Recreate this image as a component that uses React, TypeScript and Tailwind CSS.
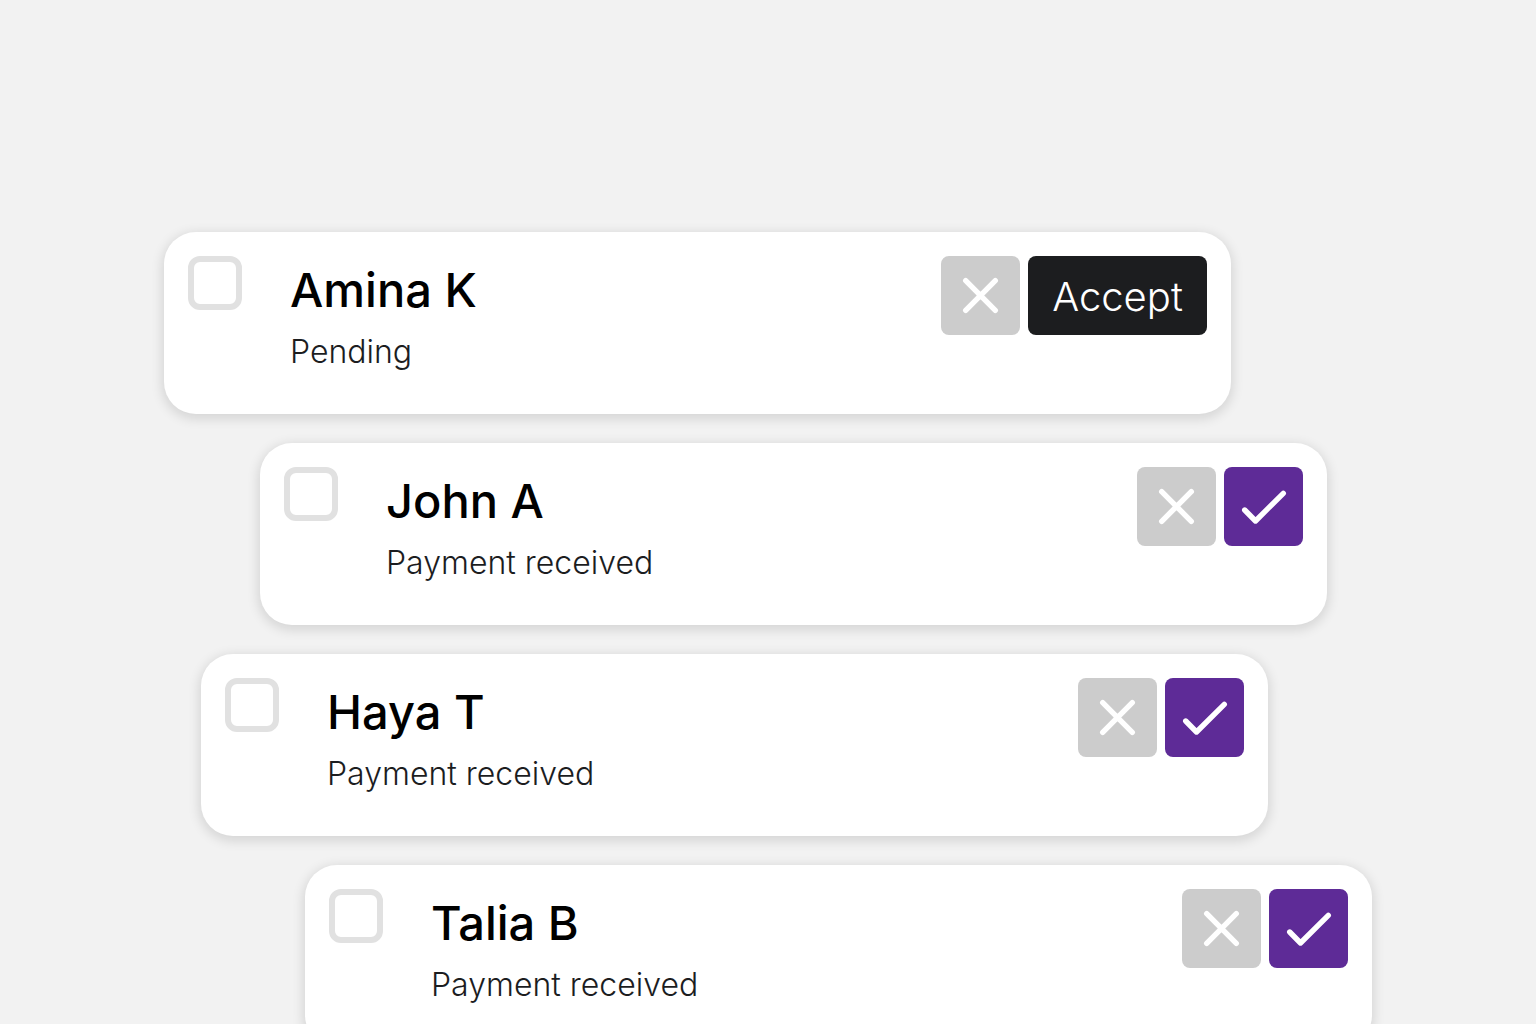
interface Guest {
  id: string
  name: string
  status: string
  pending: boolean
  offset: string
}

const guests: Guest[] = [
  { id: 'amina', name: 'Amina K', status: 'Pending', pending: true, offset: 'mr-[141px]' },
  { id: 'john', name: 'John A', status: 'Payment received', pending: false, offset: 'ml-24 mr-[45px]' },
  { id: 'haya', name: 'Haya T', status: 'Payment received', pending: false, offset: 'ml-[37px] mr-[104px]' },
  { id: 'talia', name: 'Talia B', status: 'Payment received', pending: false, offset: 'ml-[141px]' },
]

function CrossIcon() {
  return (
    <svg viewBox="0 0 79 79" className="size-full" fill="none" stroke="currentColor" strokeWidth="5.4" strokeLinecap="round" aria-hidden="true">
      <path d="M24.7 24.7 54.3 54.3M54.3 24.7 24.7 54.3" />
    </svg>
  )
}

function CheckIcon() {
  return (
    <svg viewBox="0 0 79 79" className="size-full" fill="none" stroke="currentColor" strokeWidth="5.4" strokeLinecap="round" strokeLinejoin="round" aria-hidden="true">
      <path d="M20.7 43 31.5 54 59.3 26.3" />
    </svg>
  )
}

function GuestCard({ guest }: { guest: Guest }) {
  return (
    <li
      className={`flex min-h-[182px] items-start rounded-[32px] bg-white p-6 shadow-[0_3px_12px_2px_rgba(0,0,0,0.12)] ${guest.offset}`}
    >
      <input
        id={guest.id}
        type="checkbox"
        className="size-[54px] shrink-0 appearance-none rounded-xl border-6 border-[#e1e1e1] bg-white checked:bg-[#5e2b97]"
      />

      <label htmlFor={guest.id} className="ml-12 flex flex-1 flex-col">
        <span className="text-[47px] leading-[68px] font-medium text-black">{guest.name}</span>
        <span className="text-[32px] leading-[55px] font-light text-[#1c1d1f]">{guest.status}</span>
      </label>

      {/* Actions */}
      <div className="flex shrink-0 gap-2">
        <button type="button" aria-label={`Decline ${guest.name}`} className="size-[79px] rounded-lg bg-[#cccccc] text-white">
          <CrossIcon />
        </button>
        {guest.pending ? (
          <button type="button" className="h-[79px] w-[179px] rounded-lg bg-[#1c1d1f] pt-0.5 text-[40px] font-light text-white">
            Accept
          </button>
        ) : (
          <button type="button" aria-label={`Confirm ${guest.name}`} className="size-[79px] rounded-lg bg-[#5e2b97] text-white">
            <CheckIcon />
          </button>
        )}
      </div>
    </li>
  )
}

export default function App() {
  return (
    <main className="h-screen overflow-hidden bg-[#f2f2f2] px-[164px] pt-[232px] font-['Inter','Open_Sans',sans-serif]">
      <ul className="flex flex-col gap-[29px]">
        {guests.map((guest) => (
          <GuestCard key={guest.id} guest={guest} />
        ))}
      </ul>
    </main>
  )
}
